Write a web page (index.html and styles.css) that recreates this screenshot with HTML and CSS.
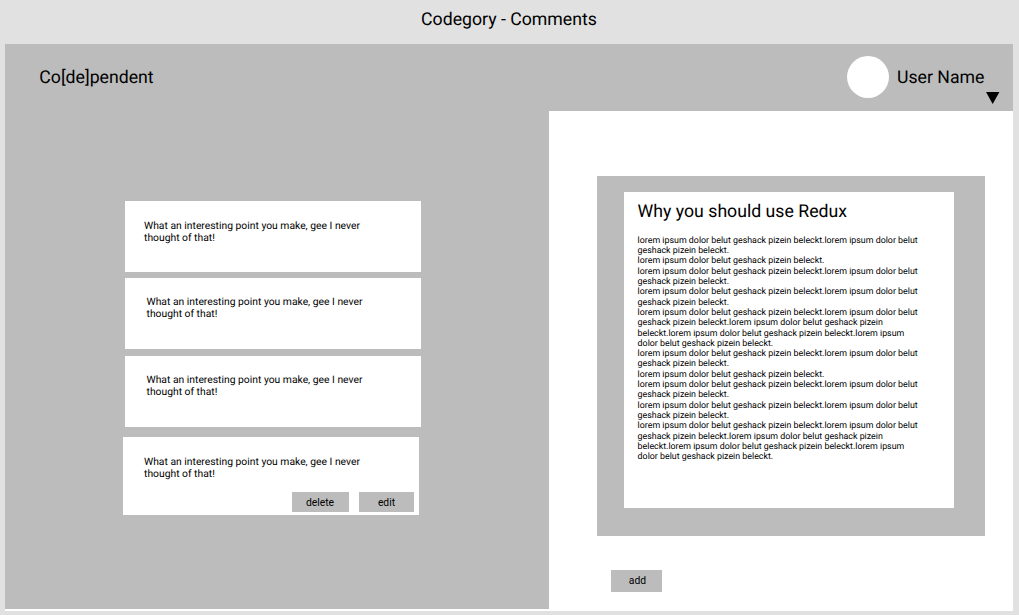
FILE: index.html
```html
<!DOCTYPE html>
<html lang="en">
<head>
<meta charset="utf-8">
<title>Codegory - Comments</title>
<link rel="stylesheet" href="styles.css">
</head>
<body>
<h1 class="page-title">Codegory - Comments</h1>
<div class="app">
  <header class="header">
    <div class="brand">Co[de]pendent</div>
    <div class="user">
      <span class="avatar"></span>
      <span class="user-name">User Name</span>
      <svg class="caret" width="14" height="13" viewBox="0 0 14 13"><path d="M0 0H13.4L6.7 12Z"/></svg>
    </div>
  </header>
  <main class="main">
    <section class="comments">
      <article class="comment"><p>What an interesting point you make, gee I never<br>thought of that!</p></article>
      <article class="comment second"><p>What an interesting point you make, gee I never<br>thought of that!</p></article>
      <article class="comment third"><p>What an interesting point you make, gee I never<br>thought of that!</p></article>
      <article class="comment own"><p>What an interesting point you make, gee I never<br>thought of that!</p>
        <div class="actions"><button class="button delete">delete</button><button class="button edit">edit</button></div>
      </article>
    </section>
    <section class="post-pane">
      <div class="post-frame">
        <article class="post">
          <h2 class="post-title">Why you should use Redux</h2>
          <p class="post-body">lorem ipsum dolor belut geshack pizein beleckt.lorem ipsum dolor belut<br>geshack pizein beleckt.<br>lorem ipsum dolor belut geshack pizein beleckt.<br>lorem ipsum dolor belut geshack pizein beleckt.lorem ipsum dolor belut<br>geshack pizein beleckt.<br>lorem ipsum dolor belut geshack pizein beleckt.lorem ipsum dolor belut<br>geshack pizein beleckt.<br>lorem ipsum dolor belut geshack pizein beleckt.lorem ipsum dolor belut<br>geshack pizein beleckt.lorem ipsum dolor belut geshack pizein<br>beleckt.lorem ipsum dolor belut geshack pizein beleckt.lorem ipsum<br>dolor belut geshack pizein beleckt.<br>lorem ipsum dolor belut geshack pizein beleckt.lorem ipsum dolor belut<br>geshack pizein beleckt.<br>lorem ipsum dolor belut geshack pizein beleckt.<br>lorem ipsum dolor belut geshack pizein beleckt.lorem ipsum dolor belut<br>geshack pizein beleckt.<br>lorem ipsum dolor belut geshack pizein beleckt.lorem ipsum dolor belut<br>geshack pizein beleckt.<br>lorem ipsum dolor belut geshack pizein beleckt.lorem ipsum dolor belut<br>geshack pizein beleckt.lorem ipsum dolor belut geshack pizein<br>beleckt.lorem ipsum dolor belut geshack pizein beleckt.lorem ipsum<br>dolor belut geshack pizein beleckt.</p>
        </article>
      </div>
      <button class="button add">add</button>
    </section>
  </main>
</div>
</body>
</html>
```
FILE: styles.css
```css
* { box-sizing: border-box; }
body {
  margin: 0;
  height: 615px;
  overflow: hidden;
  background: #e1e1e1;
  color: #000;
  font-family: Roboto, sans-serif;
  text-rendering: geometricPrecision;
}
h1, h2, p { margin: 0; font-weight: 400; }
.page-title {
  height: 44px;
  padding-top: 10px;
  padding-right: 1px;
  text-align: center;
  font-size: 17.7px;
  line-height: 21px;
}
.app { width: 1008px; height: 567px; margin-left: 5px; background: #fff; }
.header {
  display: flex;
  justify-content: space-between;
  height: 67px;
  padding: 0 13px 0 34.3px;
  background: #bcbcbc;
  font-size: 17.7px;
  line-height: 21px;
}
.brand { padding-top: 24px; }
.user { display: flex; }
.avatar { width: 42px; height: 42px; margin-top: 12.3px; border-radius: 50%; background: #fff; }
.user-name { width: 97px; padding: 24px 0 0 8px; white-space: nowrap; }
.caret { margin: 48px 0 0; }
.main { display: flex; height: 498px; }
.comments { width: 544px; padding: 90px 0 0 120px; background: #bcbcbc; }
.comment {
  width: 296px;
  height: 71px;
  padding: 19px 0 0 19px;
  background: #fff;
  font-size: 10.34px;
  line-height: 12px;
}
.second { margin-top: 6px; padding: 18px 0 0 21.5px; }
.third { margin-top: 7px; padding: 18px 0 0 21.5px; }
.own { height: 78px; margin: 10px 0 0 -2px; padding: 19px 5px 0 21px; }
.actions { display: flex; justify-content: flex-end; gap: 10px; margin-top: 12px; }
.button {
  padding: 0;
  border: 0;
  background: #bcbcbc;
  color: #000;
  font: 10.34px/12px Roboto, sans-serif;
}
.delete { width: 57px; height: 20px; padding: 1px 1px 0 0; }
.edit { width: 55px; height: 20px; padding-top: 2px; }
.post-pane { padding: 65px 0 0 48px; }
.post-frame { width: 388px; height: 360px; padding: 16px 30px 28px 27px; background: #bcbcbc; }
.post { width: 330px; height: 316px; padding: 10px 0 0 13.6px; background: #fff; }
.post-title { font-size: 17.7px; line-height: 20px; }
.post-body { margin-top: 13.7px; font-size: 8.86px; line-height: 10.32px; white-space: nowrap; }
.add { display: block; width: 51px; height: 22px; margin: 34px 0 0 14px; padding-left: 2px; }
```
